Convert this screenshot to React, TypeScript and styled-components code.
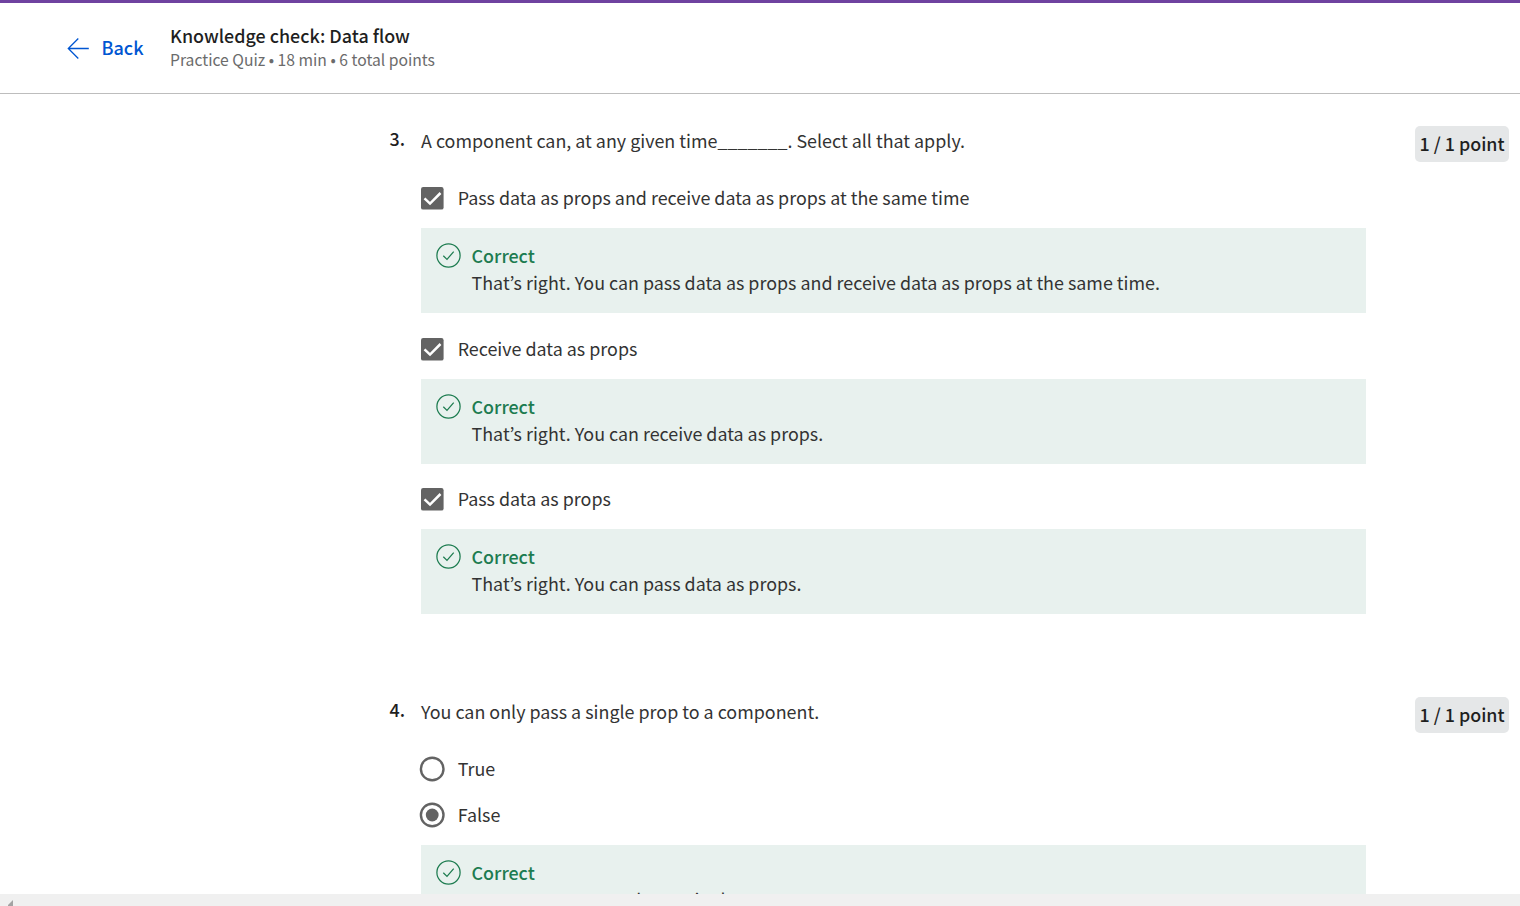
import React from "react";
import styled, { createGlobalStyle } from "styled-components";

const Global = createGlobalStyle`
  * { box-sizing: border-box; }
  html, body { margin: 0; height: 906px; overflow: hidden; background: #fff; }
  body {
    font-family: "Noto Sans CJK KR", "Noto Sans", sans-serif;
    color: #1f1f1f;
    font-kerning: normal;
  }
`;

const Page = styled.div`
  height: 906px;
  display: flex;
  flex-direction: column;
  overflow: hidden;
`;

const Header = styled.header`
  flex: none;
  height: 94px;
  border-top: 3px solid #6f42a0;
  border-bottom: 1px solid #bdbdbd;
  display: flex;
  padding-left: 67px;
`;

const BackLink = styled.a`
  display: flex;
  align-items: center;
  gap: 12.5px;
  width: 103px;
  color: #0056d2;
  font-size: 18px;
  font-weight: 500;
`;

const BackLabel = styled.span`
  padding-bottom: 2.5px;
`;

const Titles = styled.div`
  padding-top: 21px;
`;

const Title = styled.h1`
  margin: 0 0 2px;
  font-size: 17.9px;
  font-weight: 500;
  line-height: 22px;
  white-space: nowrap;
`;

const Meta = styled.p`
  margin: 0;
  font-size: 15.7px;
  font-weight: 400;
  line-height: 23px;
  color: #6b6b6b;
  white-space: nowrap;
`;

const Content = styled.main`
  flex: 1;
  min-height: 0;
  overflow: hidden;
  padding: 32px 11px 0 389px;
`;

const Question = styled.section`
  display: flex;
  align-items: flex-start;
  height: 571px;
`;

const Num = styled.div`
  width: 32px;
  padding-left: 0.5px;
  font-size: 17.9px;
  font-weight: 500;
  line-height: 24px;
`;

const Body = styled.div`
  width: 945px;
  padding-top: 1px;
`;

const Prompt = styled.p`
  margin: 0 0 31px;
  font-size: 17.9px;
  font-weight: 400;
  line-height: 26px;
  color: #333;
  white-space: nowrap;
`;

const Option = styled.label<{ $after?: number }>`
  display: flex;
  align-items: center;
  height: 27px;
  margin-bottom: ${(p) => p.$after ?? 17}px;
  font-size: 17.9px;
  font-weight: 400;
  line-height: 27px;
  color: #333;
  white-space: nowrap;
`;

const Mark = styled.span<{ $drop?: number }>`
  display: flex;
  width: 36.7px;
  padding-top: ${(p) => p.$drop ?? 0}px;
`;

const OptionLabel = styled.span`
  height: 27px;
`;

const Feedback = styled.div<{ $after?: number }>`
  display: flex;
  height: 85px;
  margin-bottom: ${(p) => p.$after ?? 21}px;
  padding: 15px 15px 0;
  background: #e8f1ee;
`;

const FeedbackText = styled.div`
  margin-top: -1px;
  padding-left: 10.5px;
  font-size: 17.9px;
  font-weight: 400;
  line-height: 27px;
  color: #333;
  white-space: nowrap;
`;

const Verdict = styled.div`
  color: #1d7c50;
  font-weight: 500;
`;

const Points = styled.div`
  margin-left: auto;
  width: 94px;
  height: 36px;
  border-radius: 5px;
  background: #e5e7e8;
  font-size: 17.9px;
  font-weight: 500;
  line-height: 34px;
  text-align: center;
  white-space: nowrap;
`;

const ScrollTrack = styled.div`
  flex: none;
  display: flex;
  height: 12px;
  background: #f0f0f0;
  padding: 6px 0 0 8px;
  overflow: hidden;
`;

const Arrow = () => (
  <svg width="22" height="22" viewBox="0 0 22 22" fill="none" stroke="#0056d2" strokeWidth="1.3">
    <path d="M11.3 1.5 1.3 11.5l10 10M1.3 11.5h20.5" />
  </svg>
);

const CheckedBox = () => (
  <svg width="23" height="23" viewBox="0 0 23 23">
    <rect width="22.6" height="22.6" rx="2.2" fill="#636363" />
    <path d="M3.5 11.3 9 16.6 19.5 6" fill="none" stroke="#fff" strokeWidth="2.5" />
  </svg>
);

const RadioSvg = styled.svg`
  margin-left: -2px;
`;

const Radio = ({ on }: { on?: boolean }) => (
  <RadioSvg width="26" height="26" viewBox="0 0 26 26">
    <circle cx="13.2" cy="13" r="11.3" fill="#fff" stroke="#636363" strokeWidth="2.4" />
    {on && <circle cx="13.2" cy="13" r="6.4" fill="#636363" />}
  </RadioSvg>
);

const CorrectIcon = () => (
  <svg width="25" height="25" viewBox="0 0 25 25" fill="none" stroke="#1d7c50" strokeWidth="1.25">
    <circle cx="12.5" cy="12.5" r="11.6" />
    <path d="M7.3 12.7 11 16.4 17.7 8.6" />
  </svg>
);

const Answer = ({ text, after }: { text: string; after?: number }) => (
  <Feedback $after={after}>
    <CorrectIcon />
    <FeedbackText>
      <Verdict>Correct</Verdict>
      {text}
    </FeedbackText>
  </Feedback>
);

const CheckOption = ({ text }: { text: string }) => (
  <Option>
    <Mark $drop={1}><CheckedBox /></Mark>
    <OptionLabel>{text}</OptionLabel>
  </Option>
);

const RadioOption = ({ text, on, after }: { text: string; on?: boolean; after?: number }) => (
  <Option $after={after}>
    <Mark><Radio on={on} /></Mark>
    <OptionLabel>{text}</OptionLabel>
  </Option>
);

export default function App() {
  return (
    <Page>
      <Global />
      <Header>
        <BackLink><Arrow /><BackLabel>Back</BackLabel></BackLink>
        <Titles>
          <Title>Knowledge check: Data flow</Title>
          <Meta>Practice Quiz • 18 min • 6 total points</Meta>
        </Titles>
      </Header>
      <Content>
        <Question>
          <Num>3.</Num>
          <Body>
            <Prompt>A component can, at any given time_______. Select all that apply.</Prompt>
            <CheckOption text="Pass data as props and receive data as props at the same time" />
            <Answer after={22} text="That’s right. You can pass data as props and receive data as props at the same time." />
            <CheckOption text="Receive data as props" />
            <Answer text="That’s right. You can receive data as props." />
            <CheckOption text="Pass data as props" />
            <Answer text="That’s right. You can pass data as props." />
          </Body>
          <Points>1 / 1 point</Points>
        </Question>
        <Question>
          <Num>4.</Num>
          <Body>
            <Prompt>You can only pass a single prop to a component.</Prompt>
            <RadioOption after={19} text="True" />
            <RadioOption on text="False" />
            <Answer text="You can pass more than a single prop to a component." />
          </Body>
          <Points>1 / 1 point</Points>
        </Question>
      </Content>
      <ScrollTrack>
        <svg width="5" height="6" viewBox="0 0 5 6"><path d="M5 0v6H0V5z" fill="#a3a3a3" /></svg>
      </ScrollTrack>
    </Page>
  );
}
